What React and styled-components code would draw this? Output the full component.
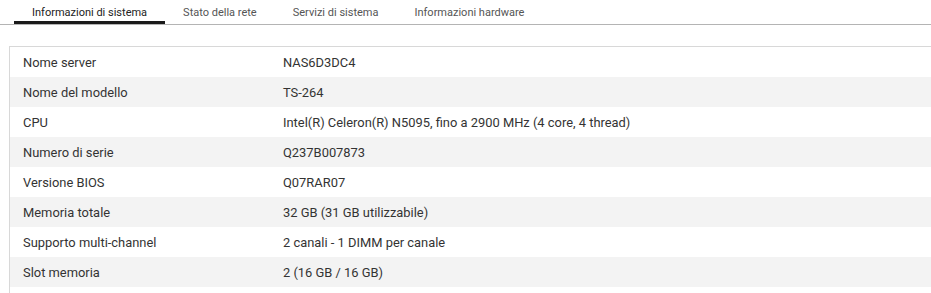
import React from "react";
import styled, { createGlobalStyle } from "styled-components";

const GlobalStyle = createGlobalStyle`
  html, body {
    margin: 0;
    padding: 0;
    background: #ffffff;
    overflow: hidden;
  }
  body {
    font-family: Roboto, "Noto Sans", Arial, sans-serif;
  }
`;

const Tabs = ["Informazioni di sistema", "Stato della rete", "Servizi di sistema", "Informazioni hardware"];

const rows = [
  { label: "Nome server", value: "NAS6D3DC4" },
  { label: "Nome del modello", value: "TS-264" },
  { label: "CPU", value: "Intel(R) Celeron(R) N5095, fino a 2900 MHz (4 core, 4 thread)" },
  { label: "Numero di serie", value: "Q237B007873" },
  { label: "Versione BIOS", value: "Q07RAR07" },
  { label: "Memoria totale", value: "32 GB (31 GB utilizzabile)" },
  { label: "Supporto multi-channel", value: "2 canali - 1 DIMM per canale" },
  { label: "Slot memoria", value: "2 (16 GB / 16 GB)" },
];

const App = () => {
  return (
    <Page>
      <GlobalStyle />
      <TabBar>
        {Tabs.map((tab, index) => (
          <Tab key={index} $active={index === 0}>
            {tab}
          </Tab>
        ))}
      </TabBar>
      <Table>
        {rows.map((row, index) => (
          <Row key={index} $striped={index % 2 === 1}>
            <Label>{row.label}</Label>
            <Value>{row.value}</Value>
          </Row>
        ))}
      </Table>
    </Page>
  );
};

export default App;

const Page = styled.div`
  width: 931px;
  height: 293px;
  overflow: hidden;
`;

const TabBar = styled.div`
  display: flex;
  height: 24px;
  padding-left: 14px;
  border-bottom: 1px solid #b4b4b4;
`;

const Tab = styled.div`
  padding: 0 18px;
  height: 24px;
  box-sizing: border-box;
  display: flex;
  align-items: center;
  padding-top: 4px;
  font-size: 11px;
  color: ${(p) => (p.$active ? "#222222" : "#555555")};
  border-bottom: 3px solid ${(p) => (p.$active ? "#1a1a1a" : "transparent")};
  margin-bottom: -1px;
  white-space: nowrap;
`;

const Table = styled.div`
  margin: 21px 0 0 9px;
  width: 960px;
  border-top: 1px solid #d8d8d8;
  border-left: 1px solid #d8d8d8;
  padding-bottom: 10px;
`;

const Row = styled.div`
  display: flex;
  align-items: center;
  height: 30px;
  background: ${(p) => (p.$striped ? "#f3f3f3" : "#ffffff")};
  font-size: 12.9px;
  color: #333333;
`;

const Label = styled.div`
  width: 260px;
  padding-left: 13px;
`;

const Value = styled.div`
  flex: 1;
`;
